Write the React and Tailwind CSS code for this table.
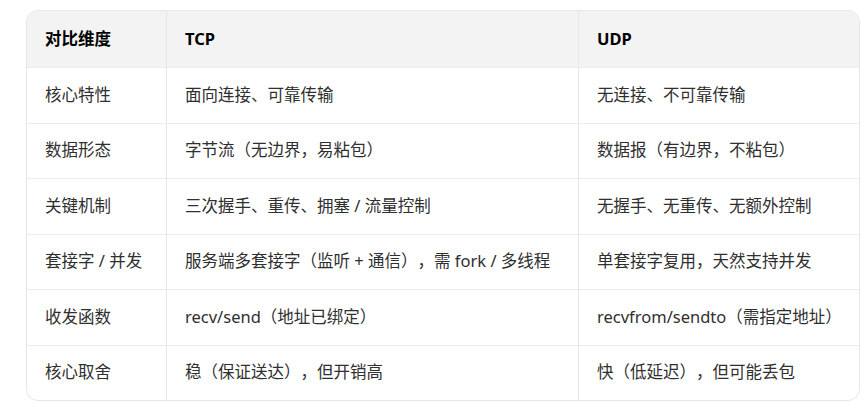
import React from "react";

const rows = [
  ["核心特性", "面向连接、可靠传输", "无连接、不可靠传输"],
  ["数据形态", "字节流（无边界，易粘包）", "数据报（有边界，不粘包）"],
  ["关键机制", "三次握手、重传、拥塞 / 流量控制", "无握手、无重传、无额外控制"],
  ["套接字 / 并发", "服务端多套接字（监听 + 通信），需 fork / 多线程", "单套接字复用，天然支持并发"],
  ["收发函数", "recv/send（地址已绑定）", "recvfrom/sendto（需指定地址）"],
  ["核心取舍", "稳（保证送达），但开销高", "快（低延迟），但可能丢包"],
];

const cell = "flex items-center pl-[18px] pr-3 whitespace-nowrap";

const App = () => {
  return (
    <div className="w-[865px] h-[410px] bg-white pl-[26px] pt-[10px] font-['Noto_Sans','Noto_Sans_CJK_SC',sans-serif] text-[16.5px] [text-spacing-trim:space-all]">
      <div className="w-[834px] rounded-xl border border-[#e6e6e6] overflow-hidden">
        <div className="grid grid-cols-[139px_412px_1fr] h-[56px] bg-[#f3f3f3] font-bold text-black">
          <div className={cell}>对比维度</div>
          <div className={`${cell} border-l border-[#e6e6e6]`}>TCP</div>
          <div className={`${cell} border-l border-[#e6e6e6]`}>UDP</div>
        </div>
        {rows.map((r, i) => (
          <div key={i} className="grid grid-cols-[139px_412px_1fr] h-[55.5px] border-t border-[#ececec] text-[#2f2f2f]">
            <div className={cell}>{r[0]}</div>
            <div className={`${cell} border-l border-[#e6e6e6]`}>{r[1]}</div>
            <div className={`${cell} border-l border-[#e6e6e6]`}>{r[2]}</div>
          </div>
        ))}
      </div>
    </div>
  );
};

export default App;
